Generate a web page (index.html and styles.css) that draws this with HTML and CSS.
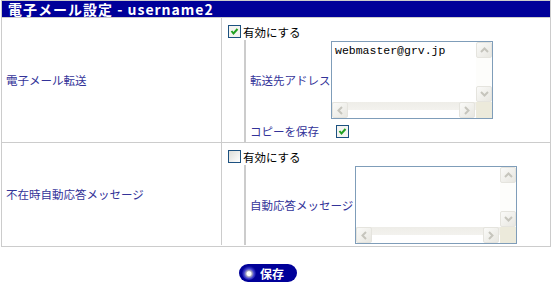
FILE: index.html
```html
<!DOCTYPE html>
<html lang="ja">
<head>
    <meta charset="UTF-8">
    <title>電子メール設定</title>
    <link rel="stylesheet" href="styles.css">
</head>
<body>
    <div class="panel">
        <div class="panel-title">電子メール設定 - username2</div>

        <div class="row">
            <div class="row-label">電子メール転送</div>
            <div class="row-body">
                <div class="enable">
                    <span class="chk on"><svg viewBox="0 0 11 11" width="11" height="11"><path d="M2.5 5 L4.5 7.5 L8.5 3" fill="none" stroke="#21a121" stroke-width="2"/></svg></span>
                    有効にする
                </div>
                <div class="sub sub-forward">
                    <div class="sub-label">転送先アドレス</div>
                    <div class="sub-field">
                        <div class="memo">
                            <div class="memo-text">webmaster@grv.jp</div>
                            <div class="vbar">
                                <span class="sb-btn"><svg viewBox="0 0 9 6" width="9" height="6"><path d="M1 5 L4.5 1.5 L8 5" fill="none" stroke="#c6c5bd" stroke-width="2"/></svg></span>
                                <span class="sb-track"></span>
                                <span class="sb-btn"><svg viewBox="0 0 9 6" width="9" height="6"><path d="M1 1 L4.5 4.5 L8 1" fill="none" stroke="#c6c5bd" stroke-width="2"/></svg></span>
                            </div>
                            <div class="hbar">
                                <span class="sb-btn"><svg viewBox="0 0 6 9" width="6" height="9"><path d="M5 1 L1.5 4.5 L5 8" fill="none" stroke="#c6c5bd" stroke-width="2"/></svg></span>
                                <span class="sb-track"></span>
                                <span class="sb-btn"><svg viewBox="0 0 6 9" width="6" height="9"><path d="M1 1 L4.5 4.5 L1 8" fill="none" stroke="#c6c5bd" stroke-width="2"/></svg></span>
                            </div>
                            <div class="corner"></div>
                        </div>
                    </div>
                    <div class="sub-label sub-label-short">コピーを保存</div>
                    <div class="sub-field sub-field-short">
                        <span class="chk on"><svg viewBox="0 0 11 11" width="11" height="11"><path d="M2.5 5 L4.5 7.5 L8.5 3" fill="none" stroke="#21a121" stroke-width="2"/></svg></span>
                    </div>
                </div>
            </div>
        </div>

        <div class="row row-last">
            <div class="row-label">不在時自動応答メッセージ</div>
            <div class="row-body">
                <div class="enable">
                    <span class="chk"></span>
                    有効にする
                </div>
                <div class="sub sub-reply">
                    <div class="sub-label">自動応答メッセージ</div>
                    <div class="sub-field">
                        <div class="memo">
                            <div class="memo-text"></div>
                            <div class="vbar">
                                <span class="sb-btn"><svg viewBox="0 0 9 6" width="9" height="6"><path d="M1 5 L4.5 1.5 L8 5" fill="none" stroke="#c6c5bd" stroke-width="2"/></svg></span>
                                <span class="sb-track"></span>
                                <span class="sb-btn"><svg viewBox="0 0 9 6" width="9" height="6"><path d="M1 1 L4.5 4.5 L8 1" fill="none" stroke="#c6c5bd" stroke-width="2"/></svg></span>
                            </div>
                            <div class="hbar">
                                <span class="sb-btn"><svg viewBox="0 0 6 9" width="6" height="9"><path d="M5 1 L1.5 4.5 L5 8" fill="none" stroke="#c6c5bd" stroke-width="2"/></svg></span>
                                <span class="sb-track"></span>
                                <span class="sb-btn"><svg viewBox="0 0 6 9" width="6" height="9"><path d="M1 1 L4.5 4.5 L1 8" fill="none" stroke="#c6c5bd" stroke-width="2"/></svg></span>
                            </div>
                            <div class="corner"></div>
                        </div>
                    </div>
                </div>
            </div>
        </div>
    </div>

    <div class="actions">
        <button type="button" class="btn-save"><span class="btn-dot"></span>保存</button>
    </div>
</body>
</html>
```

FILE: styles.css
```css
body {
    margin: 0;
    padding: 0;
    background: #fff;
    font-family: "Noto Sans CJK JP", "Liberation Sans", sans-serif;
    font-size: 11.5px;
    color: #000;
}

.panel {
    width: 548px;
    margin-left: 1px;
    border: 1px solid #ccc;
}

.panel-title {
    height: 16px;
    line-height: 16px;
    padding-left: 6px;
    background: #000099;
    color: #fff;
    font-size: 14px;
    font-weight: bold;
    letter-spacing: 1px;
    border-bottom: 1px solid #ccc;
    white-space: nowrap;
}

.row {
    display: flex;
    border-bottom: 1px solid #ccc;
}

.row-last {
    border-bottom: none;
    padding-bottom: 1px;
}

.row-label {
    width: 215px;
    padding-left: 4px;
    border-right: 1px solid #ccc;
    display: flex;
    align-items: center;
    color: #333399;
}

.row-body {
    flex: 1;
    padding-top: 5px;
}

.enable {
    height: 17px;
    display: flex;
    align-items: center;
    padding-left: 6px;
    gap: 2px;
}

/* checkbox */
.chk {
    width: 11px;
    height: 11px;
    border: 1px solid #1c5180;
    background: linear-gradient(135deg, #dcdcd7, #fff);
    display: inline-flex;
}

.chk.on {
    background: #f4f4f0;
}

.sub {
    margin-left: 22px;
    border-left: 2px solid #ccc;
    display: grid;
    align-items: center;
}

.sub-forward {
    grid-template-columns: 85px auto;
}

.sub-reply {
    grid-template-columns: 109px auto;
}

.sub-label {
    padding-left: 4px;
    color: #333399;
    white-space: nowrap;
}

.sub-field {
    padding: 1px 0;
}

.sub-label-short,
.sub-field-short {
    height: 22px;
    display: flex;
    align-items: center;
    padding: 0 0 0 4px;
}

.sub-field-short {
    padding-left: 5px;
}

/* textarea with scrollbars */
.memo {
    width: 160px;
    height: 76px;
    border: 1px solid #7f9db9;
    display: grid;
    grid-template-columns: 1fr 16px;
    grid-template-rows: 1fr 16px;
    background: #fff;
}

.memo-text {
    padding: 2px 3px;
    font-family: "Liberation Mono", "DejaVu Sans Mono", monospace;
    font-size: 11.5px;
    line-height: 14px;
    overflow: hidden;
}

.vbar {
    display: flex;
    flex-direction: column;
    background: #fdfdfb;
}

.hbar {
    display: flex;
    background: linear-gradient(#eeede8 0, #f3f2ee 50%, #fff 51%);
}

.sb-track {
    flex: 1;
}

.sb-btn {
    width: 14px;
    height: 14px;
    margin: 0 1px 1px 0;
    border: 1px solid #e5e4de;
    border-radius: 2px;
    background: linear-gradient(135deg, #fafaf8, #e8e7e1);
    display: flex;
    align-items: center;
    justify-content: center;
}

.vbar .sb-btn:last-child {
    margin-bottom: 0;
}

.corner {
    background: #eceadb;
}

/* save button */
.actions {
    display: flex;
    justify-content: center;
    padding: 17px 16px 0 0;
}

.btn-save {
    width: 58px;
    height: 18px;
    padding: 0 0 0 3px;
    border: none;
    border-radius: 9px;
    background: #000099;
    color: #fff;
    font-family: "Noto Sans CJK JP", sans-serif;
    font-size: 12px;
    font-weight: bold;
    display: flex;
    align-items: center;
    gap: 4px;
    cursor: pointer;
}

.btn-dot {
    width: 14px;
    height: 14px;
    border-radius: 50%;
    background: radial-gradient(circle at 50% 55%, #fff 0, #fff 2px, #aab 3px, #4040d0 5px, #1010a0 7px);
}
```
